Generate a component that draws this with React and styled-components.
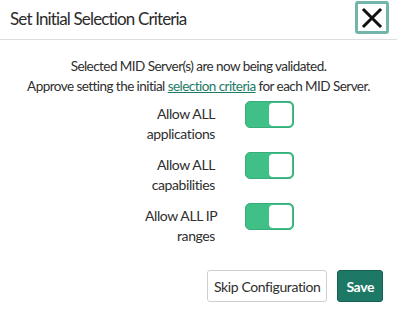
import React, { useState } from "react";
import styled, { createGlobalStyle } from "styled-components";

const GlobalStyle = createGlobalStyle`
  body {
    margin: 0;
    background: #ffffff;
    font-family: Lato, "Noto Sans", sans-serif;
    color: #2e2e2e;
  }
`;

const criteria = [
  { id: "apps", first: "Allow ALL", rest: "applications" },
  { id: "caps", first: "Allow ALL", rest: "capabilities" },
  { id: "ip", first: "Allow ALL IP", rest: "ranges" },
];

export default function App() {
  const [values, setValues] = useState({ apps: true, caps: true, ip: true });

  const flip = (id) => setValues({ ...values, [id]: !values[id] });

  return (
    <>
      <GlobalStyle />
      <Dialog>
        <Header>
          <Title>Set Initial Selection Criteria</Title>
          <CloseButton aria-label="Close">
            <svg width="22" height="22" viewBox="0 0 22 22">
              <path d="M3 3 L19 19 M19 3 L3 19" stroke="#111" strokeWidth="3" strokeLinecap="square" />
            </svg>
          </CloseButton>
        </Header>
        <Body>
          <Intro>
            <Line>Selected MID Server(s) are now being validated.</Line>
            <Line>
              Approve setting the initial <Link href="#">selection criteria</Link> for each MID Server.
            </Line>
          </Intro>
          <Rows>
            {criteria.map((c) => (
              <Row key={c.id}>
                <Label>
                  <Line>{c.first}</Line>
                  <Line>{c.rest}</Line>
                </Label>
                <Toggle $on={values[c.id]} onClick={() => flip(c.id)}>
                  <Knob />
                </Toggle>
              </Row>
            ))}
          </Rows>
        </Body>
        <Footer>
          <Button>Skip Configuration</Button>
          <Button $primary>Save</Button>
        </Footer>
      </Dialog>
    </>
  );
}

const Dialog = styled.div`
  width: 397px;
  height: 315px;
  display: flex;
  flex-direction: column;
`;

const Header = styled.div`
  height: 40px;
  display: flex;
  align-items: flex-start;
  justify-content: space-between;
  padding: 1px 8px 0 10px;
  box-sizing: border-box;
  border-bottom: 1px solid #dedede;
`;

const Title = styled.h1`
  margin: 6px 0 0;
  font-size: 17px;
  line-height: 24px;
  letter-spacing: -0.85px;
  font-weight: 400;
  color: #2b2b2b;
`;

const CloseButton = styled.button`
  width: 34px;
  height: 33px;
  display: flex;
  align-items: center;
  justify-content: center;
  padding: 0;
  background: #fff;
  border: 3px solid #72b5aa;
  border-radius: 3px;
`;

const Body = styled.div`
  padding: 16px 10px 0;
  flex: 1;
`;

const Intro = styled.div`
  text-align: center;
  font-size: 13.5px;
  line-height: 20px;
  letter-spacing: -0.55px;
`;

const Line = styled.div`
  white-space: nowrap;
`;

const Link = styled.a`
  color: #1d7a66;
  text-decoration: underline;
`;

const Rows = styled.div`
  display: flex;
  flex-direction: column;
  gap: 8px;
  margin-top: 5px;
  padding-left: 135px;
`;

const Row = styled.div`
  display: flex;
  align-items: flex-start;
  gap: 30px;
`;

const Label = styled.div`
  width: 70px;
  text-align: right;
  font-size: 14px;
  line-height: 20px;
  letter-spacing: -0.4px;
  padding-top: 3px;
`;

const Toggle = styled.div`
  width: 49px;
  height: 27px;
  box-sizing: border-box;
  display: flex;
  align-items: center;
  justify-content: ${(p) => (p.$on ? "flex-end" : "flex-start")};
  padding: 1px;
  background: ${(p) => (p.$on ? "#40bf86" : "#cccccc")};
  border: 1px solid ${(p) => (p.$on ? "#38ad79" : "#bbbbbb")};
  border-radius: 5px;
  cursor: pointer;
`;

const Knob = styled.div`
  width: 23px;
  height: 23px;
  background: #ffffff;
  border-radius: 4px;
`;

const Footer = styled.div`
  display: flex;
  justify-content: flex-end;
  gap: 10px;
  padding: 0 14px 13px 0;
`;

const Button = styled.button`
  height: 32px;
  padding: 0 ${(p) => (p.$primary ? 8 : 6)}px;
  font-family: Lato, "Noto Sans", sans-serif;
  font-size: 14px;
  letter-spacing: -0.4px;
  font-weight: ${(p) => (p.$primary ? 700 : 400)};
  color: ${(p) => (p.$primary ? "#ffffff" : "#2e2e2e")};
  background: ${(p) => (p.$primary ? "#1d7866" : "#ffffff")};
  border: 1px solid ${(p) => (p.$primary ? "#175f51" : "#cfcfcf")};
  border-radius: 3px;
`;
